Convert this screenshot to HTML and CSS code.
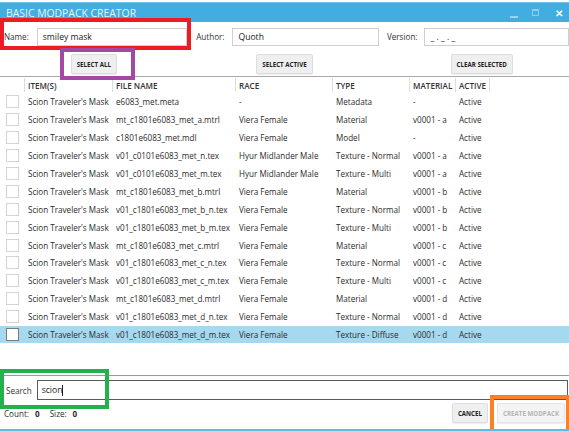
FILE: index.html
```html
<!DOCTYPE html>
<html lang="en">
<head>
    <meta charset="UTF-8">
    <title>Basic Modpack Creator</title>
    <link rel="stylesheet" href="styles.css">
</head>
<body>
<div class="window">

    <div class="title-bar">
        <span class="title">BASIC MODPACK CREATOR</span>
        <div class="window-buttons">
            <span class="win-btn min"></span>
            <span class="win-btn max"></span>
            <span class="win-btn close">✕</span>
        </div>
    </div>

    <div class="info-row">
        <label class="field-label">Name:</label>
        <div class="text-box name-box">smiley mask</div>
        <label class="field-label author-label">Author:</label>
        <div class="text-box author-box">Quoth</div>
        <label class="field-label version-label">Version:</label>
        <div class="text-box version-box">_ . _ . _</div>
    </div>

    <div class="button-row">
        <div class="btn-cell"><button class="btn">SELECT ALL</button></div>
        <div class="btn-cell"><button class="btn">SELECT ACTIVE</button></div>
        <div class="btn-cell"><button class="btn">CLEAR SELECTED</button></div>
    </div>

    <div class="grid">
        <div class="grid-row grid-head">
            <div class="cell"></div>
            <div class="cell">ITEM(S)</div>
            <div class="cell">FILE NAME</div>
            <div class="cell">RACE</div>
            <div class="cell">TYPE</div>
            <div class="cell">MATERIAL</div>
            <div class="cell">ACTIVE</div>
            <div class="cell last"></div>
        </div>
        <div id="gridBody"></div>
    </div>

    <div class="search-row">
        <label class="field-label">Search</label>
        <div class="text-box search-box">scion<span class="caret"></span></div>
    </div>

    <div class="footer-row">
        <div class="stats">
            <span>Count:</span><b>0</b>
            <span>Size:</span><b>0</b>
        </div>
        <div class="footer-buttons">
            <button class="btn">CANCEL</button>
            <button class="btn disabled">CREATE MODPACK</button>
        </div>
    </div>

    <!-- paint marks drawn over the screenshot -->
    <div class="mark mark-red"></div>
    <div class="mark mark-purple"></div>
    <div class="mark mark-green"></div>
    <div class="mark mark-orange"></div>
</div>

<script>
    const files = [
        ['e6083_met.meta', '-', 'Metadata', '-'],
        ['mt_c1801e6083_met_a.mtrl', 'Viera Female', 'Material', 'v0001 - a'],
        ['c1801e6083_met.mdl', 'Viera Female', 'Model', '-'],
        ['v01_c0101e6083_met_n.tex', 'Hyur Midlander Male', 'Texture - Normal', 'v0001 - a'],
        ['v01_c0101e6083_met_m.tex', 'Hyur Midlander Male', 'Texture - Multi', 'v0001 - a'],
        ['mt_c1801e6083_met_b.mtrl', 'Viera Female', 'Material', 'v0001 - b'],
        ['v01_c1801e6083_met_b_n.tex', 'Viera Female', 'Texture - Normal', 'v0001 - b'],
        ['v01_c1801e6083_met_b_m.tex', 'Viera Female', 'Texture - Multi', 'v0001 - b'],
        ['mt_c1801e6083_met_c.mtrl', 'Viera Female', 'Material', 'v0001 - c'],
        ['v01_c1801e6083_met_c_n.tex', 'Viera Female', 'Texture - Normal', 'v0001 - c'],
        ['v01_c1801e6083_met_c_m.tex', 'Viera Female', 'Texture - Multi', 'v0001 - c'],
        ['mt_c1801e6083_met_d.mtrl', 'Viera Female', 'Material', 'v0001 - d'],
        ['v01_c1801e6083_met_d_n.tex', 'Viera Female', 'Texture - Normal', 'v0001 - d'],
        ['v01_c1801e6083_met_d_m.tex', 'Viera Female', 'Texture - Diffuse', 'v0001 - d']
    ];

    const body = document.getElementById('gridBody');
    files.forEach((f, i) => {
        const row = document.createElement('div');
        row.className = 'grid-row' + (i === files.length - 1 ? ' selected' : '');
        row.innerHTML = `
            <div class="cell"><span class="check"></span></div>
            <div class="cell">Scion Traveler's Mask</div>
            <div class="cell">${f[0]}</div>
            <div class="cell">${f[1]}</div>
            <div class="cell">${f[2]}</div>
            <div class="cell">${f[3]}</div>
            <div class="cell">Active</div>
            <div class="cell last"></div>
        `;
        body.appendChild(row);
    });
</script>
</body>
</html>
```

FILE: styles.css
```css
body {
    margin: 0;
    background-color: #ffffff;
    font-family: 'Open Sans', 'Noto Sans', sans-serif;
    font-size: 8.1px;
    color: #2b2b2b;
}

.window {
    position: relative;
    width: 569px;
    height: 431px;
    box-sizing: border-box;
    border-bottom: 2px solid #5bbde8;
    overflow: hidden;
}

.title-bar {
    height: 20px;
    margin-top: 2px;
    background-color: #41ade0;
    border-top: 1px solid #6cc3ea;
    box-sizing: border-box;
    display: flex;
    align-items: center;
    justify-content: space-between;
    padding: 0 6px 0 6px;
}

.title {
    color: #e6f4fb;
    font-size: 10.4px;
}

.window-buttons {
    display: flex;
    align-items: center;
    gap: 14px;
}

.win-btn {
    display: inline-block;
    width: 8px;
    height: 8px;
    box-sizing: border-box;
}

.win-btn.min {
    border-bottom: 2px solid #9bd4ef;
    height: 7px;
    margin-top: 4px;
}

.win-btn.max {
    border: 1px solid #8fcdec;
    border-top-width: 2px;
    width: 7px;
    height: 7px;
}

.win-btn.close {
    width: auto;
    height: auto;
    color: #ffffff;
    font-size: 10px;
    font-weight: bold;
    line-height: 1;
    margin-left: 2px;
}

.info-row {
    display: flex;
    align-items: center;
    height: 19px;
    margin-top: 5px;
    padding-left: 4px;
}

.field-label {
    color: #333333;
}

.text-box {
    height: 18px;
    box-sizing: border-box;
    border: 1px solid #cfcfcf;
    padding: 0 5px;
    display: flex;
    align-items: center;
    font-size: 8.6px;
    color: #222222;
}

.name-box {
    width: 152px;
    margin-left: 8px;
}

.author-label {
    margin-left: 9px;
}

.author-box {
    width: 148px;
    margin-left: 8px;
}

.version-label {
    margin-left: 8px;
}

.version-box {
    width: 146px;
    margin-left: 7px;
}

.button-row {
    display: grid;
    grid-template-columns: 1fr 1fr 1fr;
    margin-top: 8px;
    height: 20px;
}

.btn-cell {
    display: flex;
    justify-content: center;
}

.btn-cell:first-child {
    padding-right: 2px;
}

.btn-cell:last-child {
    padding-left: 15px;
}

.btn {
    font-family: 'Open Sans', 'Noto Sans', sans-serif;
    font-size: 6.2px;
    font-weight: bold;
    color: #1e1e1e;
    background-color: #efefef;
    border: 1px solid #dddddd;
    border-radius: 2px;
    padding: 0 5px;
    height: 20px;
    box-shadow: 0 1px 1px rgba(0, 0, 0, 0.08);
}

.btn.disabled {
    color: #b5b5b5;
    background-color: #f4f4f4;
    border-color: #e6e6e6;
}

.grid {
    margin-top: 2px;
    border-top: 1px solid #a9a9a9;
    height: 298px;
    border-bottom: 1px solid #9a9a9a;
}

.grid-row {
    display: grid;
    grid-template-columns: 25px 88px 123px 97px 77px 46px 34px 1fr;
    height: 17.9px;
    align-items: center;
}

.grid-head {
    height: 14px;
    margin-top: 1px;
    margin-bottom: 1px;
    align-items: stretch;
}

.grid-head .cell {
    font-weight: 600;
    color: #333333;
    border-right: 1px solid #dedede;
    display: flex;
    align-items: center;
}

.grid-head .cell.last {
    border-right: none;
}

.cell {
    padding-left: 3px;
    white-space: nowrap;
    overflow: hidden;
}

.grid-row.selected {
    background-color: #a6d8ef;
}

.check {
    display: block;
    width: 13px;
    height: 13px;
    box-sizing: border-box;
    border: 1px solid #d4d4d4;
    background-color: #ffffff;
    margin-left: 3px;
}

.selected .check {
    border-color: #7c7c7c;
}

.search-row {
    display: flex;
    align-items: center;
    margin-top: 4px;
    padding-left: 6px;
    height: 20px;
}

.search-box {
    flex: 1;
    height: 20px;
    margin-left: 5px;
    margin-right: 1px;
    border: 1px solid #5a5a5a;
    padding-left: 4px;
}

.caret {
    display: inline-block;
    width: 1px;
    height: 11px;
    background-color: #222222;
}

.footer-row {
    display: flex;
    justify-content: space-between;
    align-items: center;
    height: 26px;
    padding: 0 4px 0 4px;
}

.stats span {
    margin-right: 6px;
}

.stats b {
    margin-right: 8px;
}

.footer-buttons {
    display: flex;
    gap: 9px;
}

.mark {
    position: absolute;
    border: 4px solid;
    box-sizing: border-box;
}

.mark-red {
    border-color: #ed1c24;
    left: 0;
    top: 18px;
    width: 191px;
    height: 32px;
}

.mark-purple {
    border-color: #a349a4;
    left: 60px;
    top: 48px;
    width: 75px;
    height: 32px;
}

.mark-green {
    border-color: #22b14c;
    left: 0;
    top: 369px;
    width: 109px;
    height: 40px;
}

.mark-orange {
    border-color: #ff7f27;
    left: 490px;
    top: 395px;
    width: 80px;
    height: 40px;
}
```
